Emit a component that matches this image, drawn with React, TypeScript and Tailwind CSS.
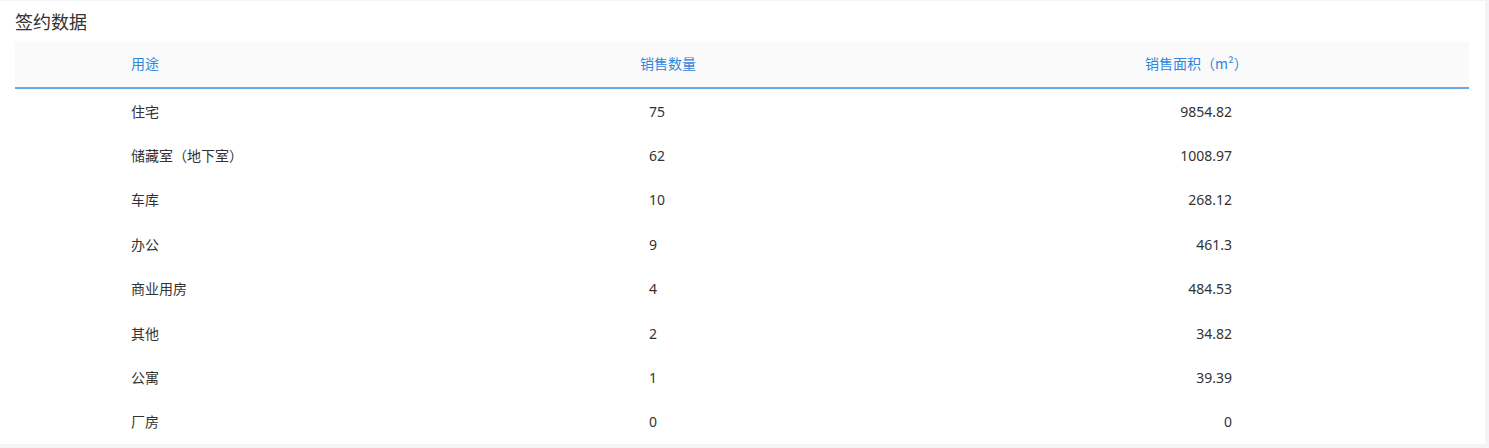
import React from 'react'

const rows = [
    { use: '住宅', count: 75, area: '9854.82' },
    { use: '储藏室（地下室）', count: 62, area: '1008.97' },
    { use: '车库', count: 10, area: '268.12' },
    { use: '办公', count: 9, area: '461.3' },
    { use: '商业用房', count: 4, area: '484.53' },
    { use: '其他', count: 2, area: '34.82' },
    { use: '公寓', count: 1, area: '39.39' },
    { use: '厂房', count: 0, area: '0' },
]

const font = { fontFamily: '"Noto Sans", "Noto Sans CJK SC", sans-serif' }
const cjk = { fontFamily: '"Noto Sans CJK SC", "Noto Sans", sans-serif' }

const App: React.FC = () => {
    return (
        <div className="w-[1489px] h-[448px] bg-[#f4f4f6] pt-px overflow-hidden" style={font}>
            <div className="w-[1485px] h-[443px] bg-white px-[15px]">
                <div className="h-[41px] pt-[8px] text-[18px] leading-[26px] text-[#333]">签约数据</div>
                <div className="w-[1454px]">
                    <div className="grid grid-cols-[485px_484px_485px] h-[47px] pb-[3px] bg-[#fafafa] border-b-2 border-[#6aaae4] text-[14px] text-[#2f87dd]">
                        <div className="flex items-center pl-[116px]">用途</div>
                        <div className="flex items-center pl-[140px]">销售数量</div>
                        <div className="flex items-center pl-[161px]" style={cjk}>销售面积（m²）</div>
                    </div>
                    {rows.map((r, i) => (
                        <div key={i} className="grid grid-cols-[485px_484px_485px] h-[44.4px] text-[14px] text-[#333]">
                            <div className="flex items-center pl-[116px]" style={cjk}>{r.use}</div>
                            <div className="flex items-center pl-[149px]">{r.count}</div>
                            <div className="flex items-center justify-end pr-[237px]">{r.area}</div>
                        </div>
                    ))}
                </div>
            </div>
        </div>
    )
}

export default App
